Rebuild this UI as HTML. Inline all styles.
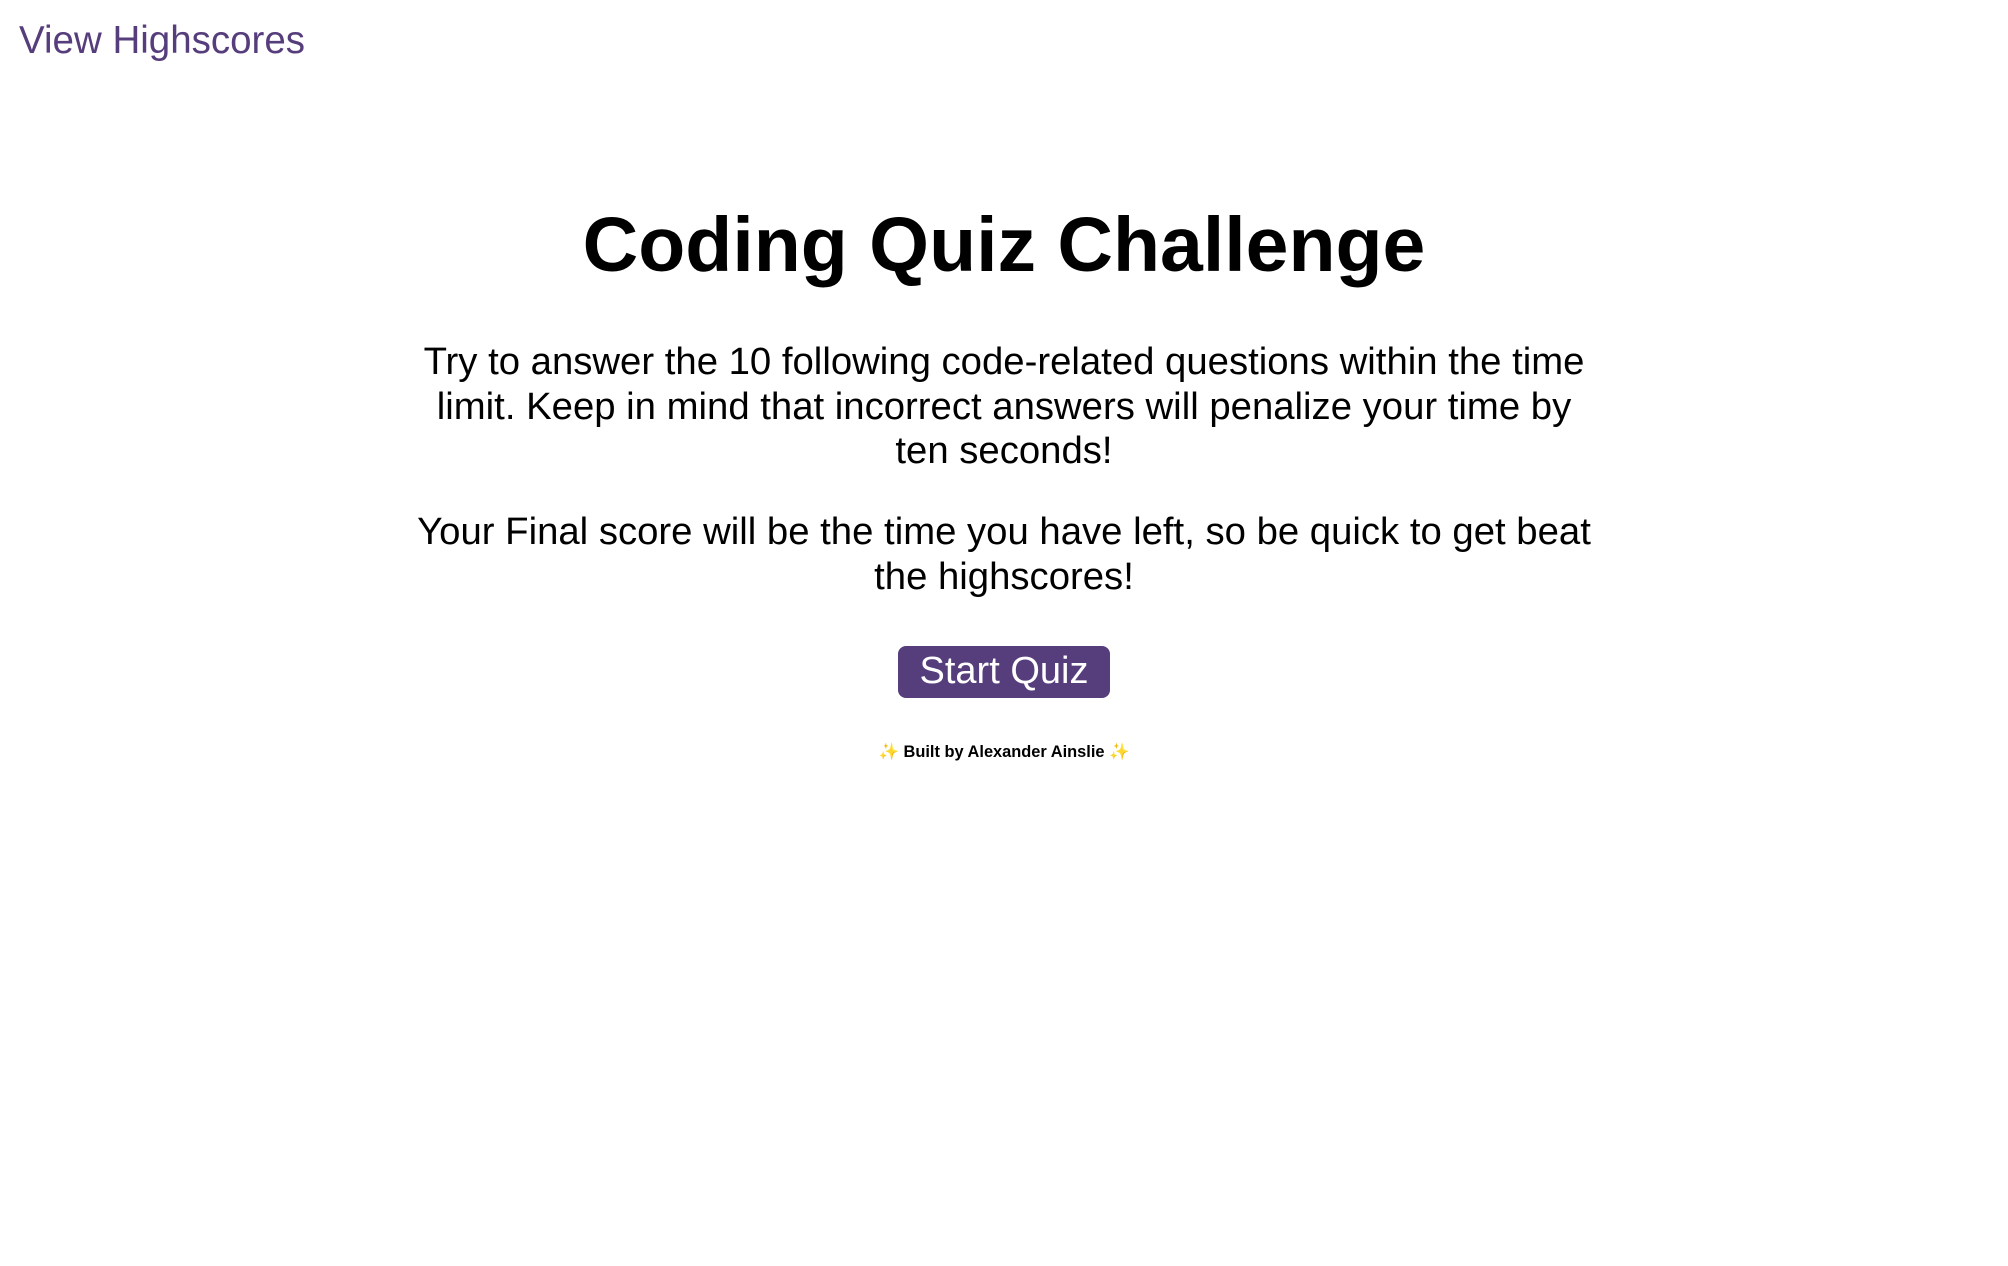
<!DOCTYPE html>
<html><head><meta charset="utf-8"><style>
html,body{margin:0;padding:0;background:#fff;width:2008px;height:1266px;overflow:hidden;font-family:"Liberation Sans",Arial,sans-serif;color:#000}
.a{position:absolute;white-space:nowrap}
.c{left:0;width:2008px;text-align:center}
#hs{left:19px;top:22px;font-size:38.5px;line-height:38px;color:#563d7c}
#t{top:207px;font-size:77px;line-height:77px;font-weight:bold}
.p{font-size:38.3px;line-height:44.5px}
#btn{left:898px;top:646px;width:212px;height:52px;background:#563d7c;border-radius:8px;color:#fff;font-size:38px;line-height:51px;text-align:center}
#f{top:744px;font-size:16.4px;line-height:16px;font-weight:bold}
</style></head><body>
<div class="a" id="hs">View Highscores</div>
<div class="a c" id="t">Coding Quiz Challenge</div>
<div class="a c p" style="top:340px">Try to answer the 10 following code-related questions within the time<br>limit. Keep in mind that incorrect answers will penalize your time by<br>ten seconds!</div>
<div class="a c p" style="top:510px">Your Final score will be the time you have left, so be quick to get beat<br>the highscores!</div>
<div class="a" id="btn">Start Quiz</div>
<div class="a c" id="f"><span style="color:#f2c94c;font-weight:normal">✨</span> Built by Alexander Ainslie <span style="color:#f2c94c;font-weight:normal">✨</span></div>
</body></html>
